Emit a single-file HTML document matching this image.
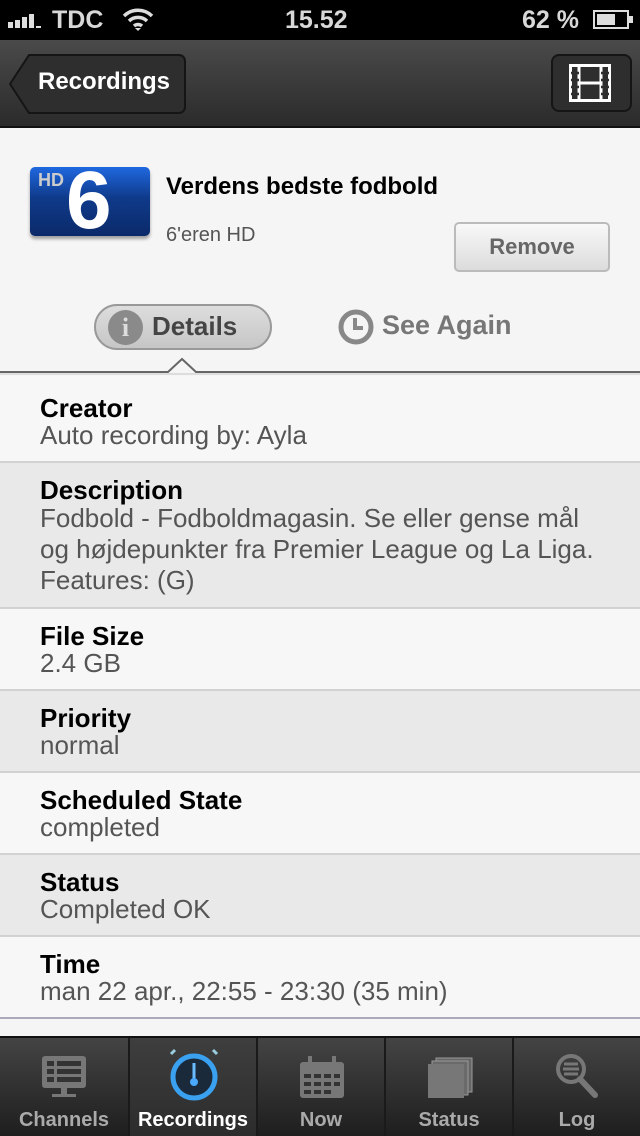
<!DOCTYPE html><html><head><style>
*{margin:0;padding:0;box-sizing:border-box}
body{width:640px;height:1136px;overflow:hidden;background:#f5f5f5;font-family:"Liberation Sans",sans-serif;position:relative}
.a{position:absolute}
.sb{top:0;left:0;width:640px;height:40px;background:#000;color:#d8d8d8;font-size:25px;font-weight:bold}
.nav{top:40px;left:0;width:640px;height:88px;background:linear-gradient(#4a4a4a,#2b2b2b);border-bottom:2px solid #111}
.row{left:0;width:640px;border-bottom:2px solid #d2d2d2}
.row b{position:absolute;left:40px;font-size:26px;color:#000;white-space:nowrap}
.row span{position:absolute;left:40px;font-size:26px;color:#555;line-height:31px;white-space:nowrap}
.tab{top:1038px;height:98px;width:128px;border-left:2px solid #1a1a1a;text-align:center;color:#aaa;font-size:20px;font-weight:bold}
.tab div{position:absolute;bottom:4px;width:100%;text-align:center}
</style></head><body>
<div class="a sb">
<div class="a" style="left:8px;top:14px;width:34px;height:14px">
<div class="a" style="left:0;top:8px;width:5px;height:6px;background:#ddd"></div>
<div class="a" style="left:7px;top:6px;width:5px;height:8px;background:#ddd"></div>
<div class="a" style="left:14px;top:3px;width:5px;height:11px;background:#ddd"></div>
<div class="a" style="left:21px;top:0;width:5px;height:14px;background:#ddd"></div>
<div class="a" style="left:28px;top:12px;width:5px;height:2px;background:#ddd"></div></div>
<div class="a" style="left:52px;top:6px">TDC</div>
<svg class="a" style="left:122px;top:6px" width="32" height="26" viewBox="0 0 32 26"><path d="M2 10a20 20 0 0 1 28 0M7 15a13 13 0 0 1 18 0M12 20a6 6 0 0 1 8 0" stroke="#ddd" stroke-width="3.5" fill="none"/><path d="M13 22l3 3 3-3z" fill="#ddd"/></svg>
<div class="a" style="left:285px;top:6px">15.52</div>
<div class="a" style="left:522px;top:6px">62 %</div>
<div class="a" style="left:593px;top:10px;width:36px;height:19px;border:2px solid #ddd"><div style="margin:2px;width:18px;height:11px;background:#ddd"></div></div>
<div class="a" style="left:629px;top:16px;width:4px;height:7px;background:#ddd"></div>
</div>
<div class="a nav">
<svg class="a" style="left:9px;top:14px" width="178" height="60"><path d="M20 1H170a6 6 0 0 1 6 6V53a6 6 0 0 1-6 6H20L1 30z" fill="#2e2e2e" stroke="#151515" stroke-width="2"/></svg>
<div class="a" style="left:38px;top:28px;color:#fff;font-size:24px;font-weight:bold">Recordings</div>
<div class="a" style="left:551px;top:14px;width:81px;height:58px;background:#2e2e2e;border:2px solid #151515;border-radius:8px"></div>
<svg class="a" style="left:569px;top:24px" width="42" height="38" viewBox="0 0 42 38"><rect x="1.5" y="1.5" width="39" height="35" fill="none" stroke="#fff" stroke-width="3"/><path d="M10 2v34M32 2v34M10 19h22" stroke="#fff" stroke-width="3"/><path d="M2 9h8M2 16h8M2 23h8M2 30h8M32 9h8M32 16h8M32 23h8M32 30h8" stroke="#2e2e2e" stroke-width="2.5"/></svg>
</div>
<div class="a" style="left:30px;top:167px;width:120px;height:69px;border-radius:5px;background:linear-gradient(#1f68e0,#0f3a8a 45%,#0b2a6a);box-shadow:0 3px 3px rgba(0,0,0,.35)"></div>
<div class="a" style="left:38px;top:170px;font-size:18px;font-weight:900;color:#ccc">HD</div>
<div class="a" style="left:66px;top:156px;font-size:82px;font-weight:bold;color:#fff;line-height:90px">6</div>
<div class="a" style="left:166px;top:173px;font-size:24px;font-weight:bold;white-space:nowrap">Verdens bedste fodbold</div>
<div class="a" style="left:166px;top:224px;font-size:20px;color:#555">6'eren HD</div>
<div class="a" style="left:454px;top:222px;width:156px;height:50px;border:2px solid #bbb;border-radius:5px;background:linear-gradient(#f8f8f8,#dcdcdc);color:#666;font-size:22px;font-weight:bold;text-align:center;line-height:46px">Remove</div>
<div class="a" style="left:94px;top:304px;width:178px;height:46px;border:2px solid #999;border-radius:23px;background:linear-gradient(#ddd,#c6c6c6)"></div>
<div class="a" style="left:108px;top:310px;width:35px;height:35px;border-radius:50%;background:#8a8a8a;color:#ddd;font:bold 26px 'Liberation Serif';text-align:center;line-height:35px">i</div>
<div class="a" style="left:152px;top:311px;font-size:26px;font-weight:bold;color:#444">Details</div>
<svg class="a" style="left:337px;top:308px" width="38" height="38"><circle cx="19" cy="19" r="15" fill="none" stroke="#888" stroke-width="5"/><path d="M18 10v10h8" stroke="#888" stroke-width="4" fill="none"/></svg>
<div class="a" style="left:382px;top:310px;font-size:27px;font-weight:bold;color:#777">See Again</div>
<svg class="a" style="left:0;top:356px" width="640" height="20"><path d="M0 16H168L182 3 196 16H640" stroke="#666" stroke-width="2" fill="none"/><path d="M0 18H640" stroke="#ddd" stroke-width="2"/></svg>
<div class="a row" style="top:376px;height:87px;background:#f7f7f7"><b style="top:17px">Creator</b><span style="top:44px">Auto recording by: Ayla</span></div>
<div class="a row" style="top:463px;height:146px;background:#e9e9e9"><b style="top:12px">Description</b><span style="top:40px">Fodbold - Fodboldmagasin. Se eller gense mål<br>og højdepunkter fra Premier League og La Liga.<br>Features: (G)</span></div>
<div class="a row" style="top:609px;height:82px;background:#f7f7f7"><b style="top:12px">File Size</b><span style="top:39px">2.4 GB</span></div>
<div class="a row" style="top:691px;height:82px;background:#e9e9e9"><b style="top:12px">Priority</b><span style="top:39px">normal</span></div>
<div class="a row" style="top:773px;height:82px;background:#f7f7f7"><b style="top:12px">Scheduled State</b><span style="top:39px">completed</span></div>
<div class="a row" style="top:855px;height:82px;background:#e9e9e9"><b style="top:12px">Status</b><span style="top:39px">Completed OK</span></div>
<div class="a row" style="top:937px;height:82px;background:#f7f7f7;border-bottom-color:#aab"><b style="top:12px">Time</b><span style="top:39px">man 22 apr., 22:55 - 23:30 (35 min)</span></div>
<div class="a" style="top:1036px;left:0;width:640px;height:100px;background:linear-gradient(#444,#1e1e1e);border-top:2px solid #111"></div>
<div class="a tab" style="left:0;border-left:none"><svg class="a" style="left:40px;top:16px" width="48" height="44"><rect x="2" y="2" width="44" height="32" rx="3" fill="#777"/><rect x="7" y="7" width="7" height="5" fill="#333"/><rect x="17" y="7" width="24" height="5" fill="#333"/><rect x="7" y="15" width="7" height="5" fill="#333"/><rect x="17" y="15" width="24" height="5" fill="#333"/><rect x="7" y="23" width="7" height="5" fill="#333"/><rect x="17" y="23" width="24" height="5" fill="#333"/><rect x="21" y="34" width="6" height="6" fill="#777"/><rect x="12" y="40" width="24" height="3" fill="#777"/></svg><div>Channels</div></div>
<div class="a tab" style="left:128px;background:linear-gradient(#3e3e3e,#2c2c2c);color:#fff"><svg class="a" style="left:36px;top:8px" width="56" height="56"><circle cx="28" cy="31" r="21" fill="#1a2a3a" stroke="#3aa0f0" stroke-width="5"/><path d="M28 17v18" stroke="#6bbcff" stroke-width="3"/><circle cx="28" cy="36" r="4" fill="#4aa8ff"/><path d="M5 8l4-4M51 8l-4-4" stroke="#9cd" stroke-width="3"/></svg><div>Recordings</div></div>
<div class="a tab" style="left:256px"><svg class="a" style="left:40px;top:16px" width="48" height="46"><rect x="2" y="8" width="44" height="36" rx="3" fill="#777"/><path d="M12 2v10M36 2v10" stroke="#777" stroke-width="4"/><g fill="#333"><rect x="6" y="20" width="7" height="4"/><rect x="16" y="20" width="7" height="4"/><rect x="26" y="20" width="7" height="4"/><rect x="36" y="20" width="6" height="4"/><rect x="6" y="28" width="7" height="4"/><rect x="16" y="28" width="7" height="4"/><rect x="26" y="28" width="7" height="4"/><rect x="36" y="28" width="6" height="4"/><rect x="6" y="36" width="7" height="4"/><rect x="16" y="36" width="7" height="4"/><rect x="26" y="36" width="7" height="4"/></g></svg><div>Now</div></div>
<div class="a tab" style="left:384px"><svg class="a" style="left:40px;top:18px" width="48" height="44"><rect x="10" y="2" width="36" height="34" fill="#666" stroke="#999" stroke-width="1"/><rect x="6" y="5" width="36" height="34" fill="#6a6a6a" stroke="#999" stroke-width="1"/><rect x="2" y="8" width="36" height="34" fill="#777"/></svg><div>Status</div></div>
<div class="a tab" style="left:512px"><svg class="a" style="left:40px;top:14px" width="48" height="50"><circle cx="17" cy="17" r="13" fill="none" stroke="#777" stroke-width="4"/><path d="M10 12h14M9 17h16M10 22h14" stroke="#777" stroke-width="3"/><path d="M26 27l15 16" stroke="#777" stroke-width="6" stroke-linecap="round"/></svg><div>Log</div></div>
</body></html>
